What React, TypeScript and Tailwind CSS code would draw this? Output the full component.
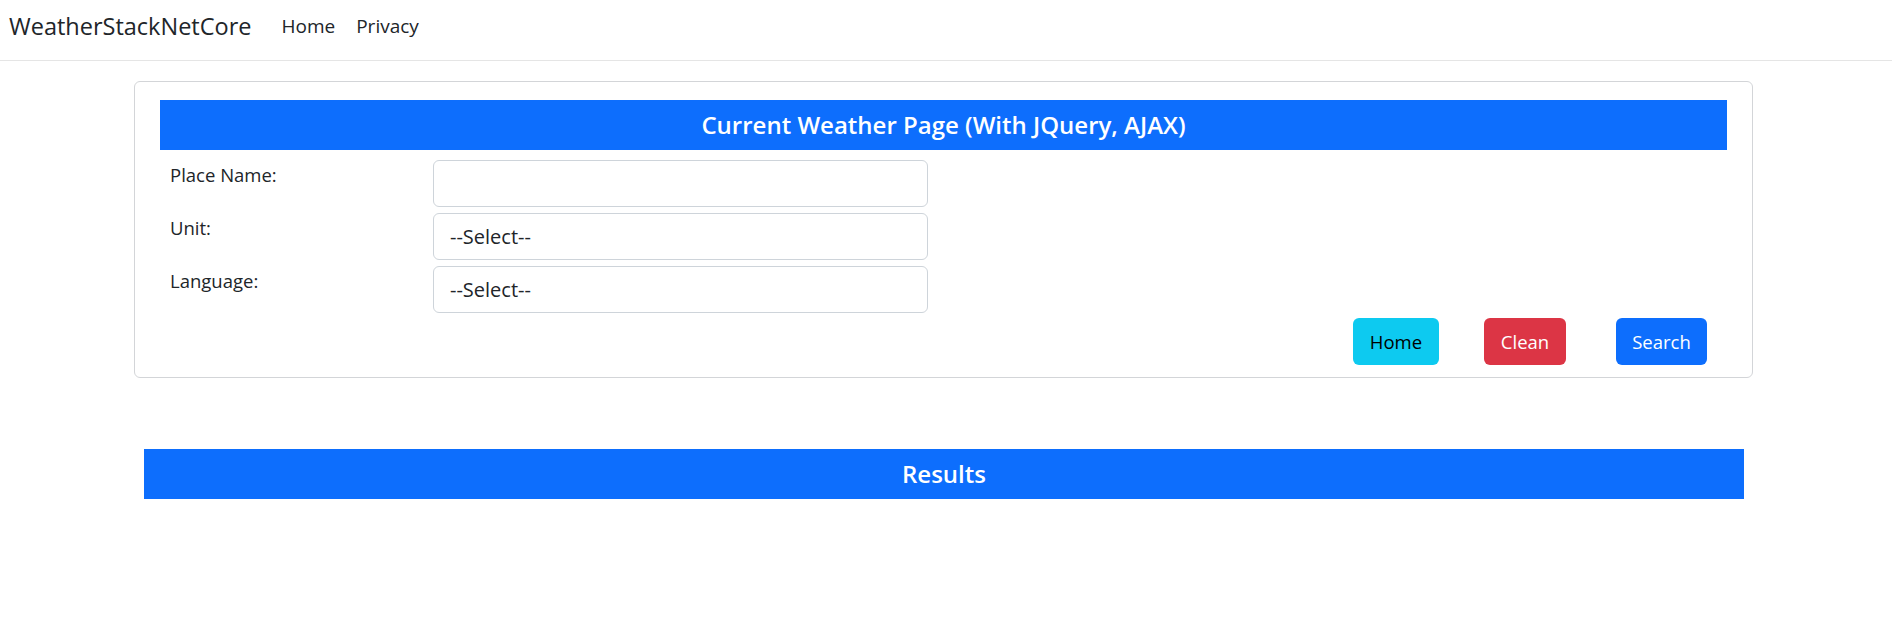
import React from "react";

const font = { fontFamily: '"Open Sans", "Noto Sans", sans-serif' };

function Row({ label, children }: { label: string; children: React.ReactNode }) {
  return (
    <div className="flex h-[47px]">
      <div className="w-[273px] pl-[10px] pt-[1px] text-[18.5px] leading-[27px] text-[#212529]">{label}</div>
      {children}
    </div>
  );
}

export default function App() {
  return (
    <div className="min-h-[619px] bg-white text-[#212529]" style={font}>
      <nav className="flex h-[61px] items-center border-b border-[#e5e5e5] pb-[8px] pl-[9px]">
        <span className="mr-[30px] text-[23.5px] leading-[32px] text-[#212529]">WeatherStackNetCore</span>
        <div className="flex items-center gap-[21px] text-[19px] text-[#212529]">
          <span>Home</span>
          <span>Privacy</span>
        </div>
      </nav>

      <div className="ml-[134px] mt-[20px] w-[1619px] rounded-[6px] border border-[#d3d5d8] px-[25px] pt-[18px] pb-[12px]">
        <div className="flex h-[50px] items-center justify-center bg-[#0d6efd] text-[24px] font-semibold text-white">
          Current Weather Page (With JQuery, AJAX)
        </div>
        <div className="mt-[10px] flex flex-col gap-[6px]">
          <Row label="Place Name:">
            <div className="h-[47px] w-[495px] rounded-[6px] border border-[#ced4da] bg-white" />
          </Row>
          <Row label="Unit:">
            <div className="flex h-[47px] w-[495px] items-center rounded-[6px] border border-[#ced4da] bg-white pl-[16px] text-[20px] text-[#212529]">
              --Select--
            </div>
          </Row>
          <Row label="Language:">
            <div className="flex h-[47px] w-[495px] items-center rounded-[6px] border border-[#ced4da] bg-white pl-[16px] text-[20px] text-[#212529]">
              --Select--
            </div>
          </Row>
        </div>
        <div className="mt-[5px] flex justify-end pr-[20px]">
          <button className="flex h-[47px] w-[86px] items-center justify-center rounded-[6px] bg-[#0dcaf0] text-[18.5px] text-black">
            Home
          </button>
          <button className="ml-[45px] flex h-[47px] w-[82px] items-center justify-center rounded-[6px] bg-[#dc3545] text-[18.5px] text-white">
            Clean
          </button>
          <button className="ml-[50px] flex h-[47px] w-[91px] items-center justify-center rounded-[6px] bg-[#0d6efd] text-[18.5px] text-white">
            Search
          </button>
        </div>
      </div>

      <div className="ml-[144px] mt-[71px] flex h-[50px] w-[1600px] items-center justify-center bg-[#0d6efd] text-[24px] font-semibold text-white">
        Results
      </div>
    </div>
  );
}
